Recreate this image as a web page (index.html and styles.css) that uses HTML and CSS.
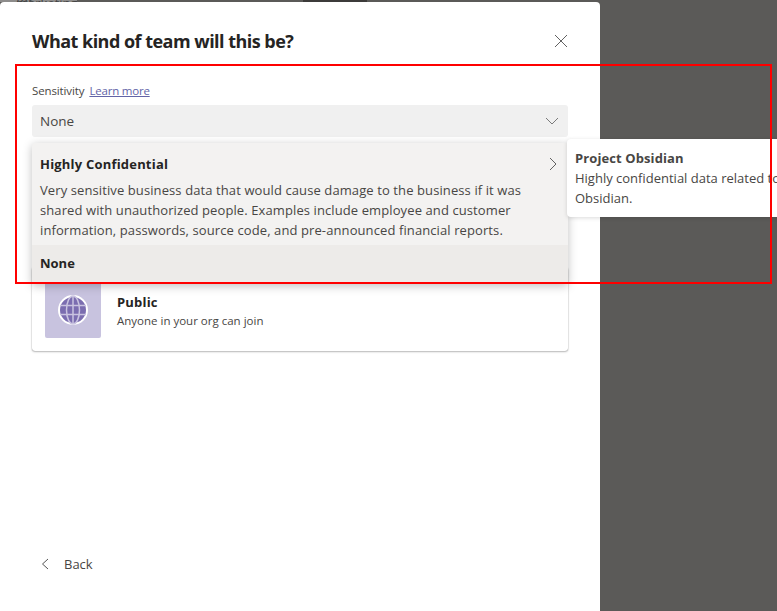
FILE: index.html
```html
<!DOCTYPE html>
<html lang="en">
<head>
<meta charset="utf-8">
<title>What kind of team will this be?</title>
<link rel="stylesheet" href="styles.css">
</head>
<body>
<div class="backdrop-strip"><span class="strip-text">for marketing</span><span class="strip-dark"></span></div>
<main class="dialog">
  <header class="dialog-head">
    <h1 class="dialog-title">What kind of team will this be?</h1>
    <svg class="close" width="14" height="14" viewBox="0 0 14 14"><path d="M1 1l12 12M13 1L1 13" fill="none" stroke="#616161" stroke-width="1"/></svg>
  </header>
  <div class="label-row"><span class="label">Sensitivity</span><a class="learn" href="#">Learn more</a></div>
  <div class="select"><span>None</span>
    <svg width="14" height="8" viewBox="0 0 14 8"><path d="M1 1l6 6 6-6" fill="none" stroke="#7a7a7a" stroke-width="1"/></svg>
  </div>
  <section class="card">
    <div class="card-icon">
      <svg width="30" height="30" viewBox="0 0 30 30">
        <circle cx="15" cy="15" r="14" fill="#7b6db0" stroke="#fff" stroke-width="2"/>
        <path d="M2 10.500h26M2 19.500h26M15 1v28" fill="none" stroke="#c9c3e0" stroke-width="1.500"/>
        <ellipse cx="15" cy="15" rx="6.500" ry="14" fill="none" stroke="#c9c3e0" stroke-width="1.500"/>
      </svg>
    </div>
    <div class="card-text">
      <div class="card-title">Public</div>
      <div class="card-sub">Anyone in your org can join</div>
    </div>
  </section>
  <footer class="back">
    <svg width="8" height="12" viewBox="0 0 8 12"><path d="M7 1L1.500 6 7 11" fill="none" stroke="#555" stroke-width="1"/></svg>
    <span>Back</span>
  </footer>
  <div class="menu">
    <div class="option-main">
      <div class="option-head"><strong>Highly Confidential</strong>
        <svg width="8" height="14" viewBox="0 0 8 14"><path d="M1 1l6 6-6 6" fill="none" stroke="#616161" stroke-width="1"/></svg>
      </div>
      <p class="option-desc">Very sensitive business data that would cause damage to the business if it was shared with unauthorized people. Examples include employee and customer information, passwords, source code, and pre-announced financial reports.</p>
    </div>
    <div class="option-none"><strong>None</strong></div>
  </div>
</main>
<aside class="tip">
  <strong>Project Obsidian</strong>
  <p>Highly confidential data related to Project Obsidian.</p>
</aside>
<div class="redbox"></div>
</body>
</html>
```
FILE: styles.css
```css
* { box-sizing: border-box; }
html, body { margin: 0; height: 100%; }
body {
  position: relative;
  overflow: hidden;
  background: #5b5a58;
  font-family: "Open Sans", "Noto Sans", sans-serif;
  color: #252423;
  width: 777px;
  height: 611px;
}
.backdrop-strip { height: 2px; overflow: hidden; position: relative; }
.strip-text {
  position: absolute;
  left: 0;
  top: 0;
  width: 77px;
  height: 2px;
  overflow: hidden;
  background: #8d8c8b;
  font-size: 13px;
  line-height: 2px;
  padding-left: 16px;
  color: #444;
}
.strip-dark { position: absolute; left: 303px; top: 0; width: 64px; height: 2px; background: #3c3b3a; }
.dialog {
  position: relative;
  width: 600px;
  height: 609px;
  background: #fff;
  border-radius: 4px 4px 0 0;
  padding: 0 32px;
  display: flex;
  flex-direction: column;
}
.dialog-head {
  display: flex;
  justify-content: space-between;
  align-items: center;
  height: 32px;
  margin-top: 23px;
}
.dialog-title { margin: 0; font-size: 18px; font-weight: 700; color: #252423; letter-spacing: -0.52px; }
.label-row { display: flex; gap: 5px; align-items: center; margin-top: 26px; height: 14px; font-size: 11.500px; }
.label { color: #484644; letter-spacing: -0.12px; }
.learn { color: #6264a7; text-decoration: underline; letter-spacing: -0.2px; }
.select {
  margin-top: 8px;
  height: 32px;
  background: #f0f0f0;
  border-radius: 3px;
  padding: 0 9px 0 8px;
  display: flex;
  align-items: center;
  justify-content: space-between;
  font-size: 13.500px;
  color: #484644;
}
.card {
  margin-top: 130px;
  height: 84px;
  border-radius: 3px;
  background: #fff;
  box-shadow: 0 1px 2px rgba(0,0,0,.25), 0 0 1px rgba(0,0,0,.45);
  display: flex;
  padding: 15px 13px 13px;
  gap: 16px;
}
.card-icon {
  width: 56px;
  height: 56px;
  background: #c8c3df;
  border-radius: 2px;
  display: flex;
  align-items: center;
  justify-content: center;
}
.card-text { padding-top: 10px; }
.card-title { font-size: 13px; font-weight: 700; line-height: 20px; letter-spacing: 0.2px; }
.card-sub { font-size: 11.500px; line-height: 18px; color: #484644; }
.back {
  margin-top: auto;
  margin-bottom: 38px;
  display: flex;
  align-items: center;
  gap: 15px;
  padding-left: 9px;
  font-size: 13px;
  color: #484644;
}
.menu {
  position: absolute;
  left: 32px;
  top: 141px;
  width: 536px;
  background: #f3f2f1;
  box-shadow: 0 2px 10px rgba(0,0,0,.25);
  border-radius: 3px;
}
.option-main { padding: 9px 8px 0; height: 102px; }
.option-head { display: flex; justify-content: space-between; align-items: center; height: 24px; padding-right: 3px; font-size: 13px; letter-spacing: 0.2px; }
.option-desc { margin: 4px 0 0; width: 500px; font-size: 13px; line-height: 20px; color: #484644; letter-spacing: 0.1px; }
.option-none { height: 39px; background: #edebe9; padding: 0 8px 3px; display: flex; align-items: center; font-size: 13px; }
.tip {
  position: absolute;
  left: 567px;
  top: 139px;
  width: 300px;
  height: 78px;
  background: #fff;
  border-radius: 4px;
  box-shadow: 0 1px 4px rgba(0,0,0,.15);
  padding: 9px 8px;
  font-size: 13px;
  line-height: 20px;
  color: #484644;
}
.tip strong { display: block; letter-spacing: 0.1px; }
.tip p { margin: 0; }
.redbox {
  position: absolute;
  left: 15px;
  top: 64px;
  width: 757px;
  height: 220px;
  border: 2px solid #f00;
}
```
